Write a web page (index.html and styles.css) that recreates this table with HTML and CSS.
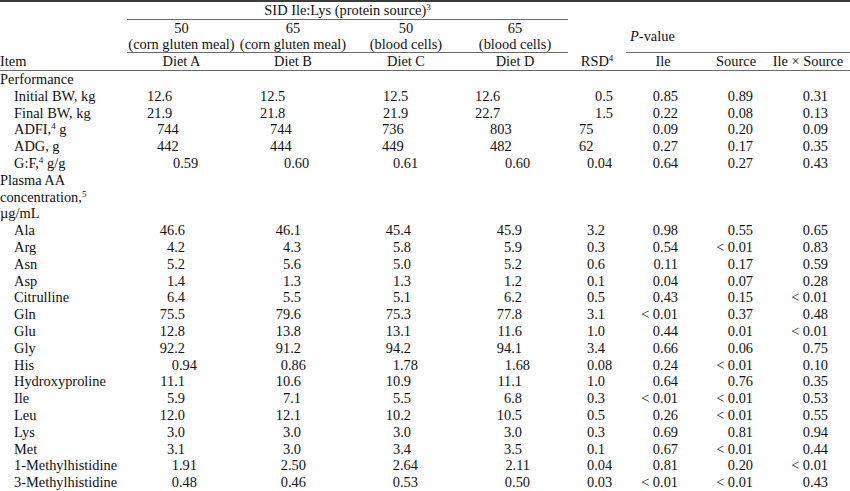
FILE: index.html
```html
<!DOCTYPE html>
<html>
<head>
<meta charset="utf-8">
<link rel="stylesheet" href="styles.css">
</head>
<body>
<table class="tbl">
<colgroup>
<col class="w-item"><col class="w-a"><col class="w-b"><col class="w-c"><col class="w-d"><col class="w-r"><col class="w-i"><col class="w-s"><col class="w-x">
</colgroup>
<thead>
<tr class="h1">
<td></td>
<td colspan="4" class="span ul">SID Ile:Lys (protein source)<sup>3</sup></td>
<td></td>
<td colspan="3"></td>
</tr>
<tr class="h2">
<td></td>
<td class="hc">50</td><td class="hc">65</td><td class="hc">50</td><td class="hc">65</td>
<td></td>
<td colspan="3" rowspan="2" class="pv ul"><i>P</i>-value</td>
</tr>
<tr class="h3">
<td></td>
<td class="hc ul">(corn gluten meal)</td><td class="hc ul">(corn gluten meal)</td><td class="hc ul">(blood cells)</td><td class="hc ul">(blood cells)</td>
<td></td>
</tr>
<tr class="h4">
<td class="ul hl">Item</td>
<td class="hc ul">Diet A</td><td class="hc ul">Diet B</td><td class="hc ul">Diet C</td><td class="hc ul">Diet D</td>
<td class="hc ul rsd">RSD<sup>4</sup></td>
<td class="hc ul">Ile</td><td class="hc ul src">Source</td><td class="hc ul">Ile × Source</td>
</tr>
</thead>
<tbody>
<tr><td class="grp">Performance</td><td></td><td></td><td></td><td></td><td></td><td></td><td></td><td></td></tr>
<tr class="p1"><td class="it">Initial BW, kg</td><td class="a">12.6</td><td class="b">12.5</td><td class="c">12.5</td><td class="d">12.6</td><td class="r">0.5</td><td class="i">0.85</td><td class="s">0.89</td><td class="x">0.31</td></tr>
<tr class="p1"><td class="it">Final BW, kg</td><td class="a">21.9</td><td class="b">21.8</td><td class="c">21.9</td><td class="d">22.7</td><td class="r">1.5</td><td class="i">0.22</td><td class="s">0.08</td><td class="x">0.13</td></tr>
<tr class="pi"><td class="it">ADFI,<sup>4</sup> g</td><td class="a">744</td><td class="b">744</td><td class="c">736</td><td class="d">803</td><td class="r">75</td><td class="i">0.09</td><td class="s">0.20</td><td class="x">0.09</td></tr>
<tr class="pi"><td class="it">ADG, g</td><td class="a">442</td><td class="b">444</td><td class="c">449</td><td class="d">482</td><td class="r">62</td><td class="i">0.27</td><td class="s">0.17</td><td class="x">0.35</td></tr>
<tr class="p2"><td class="it">G:F,<sup>4</sup> g/g</td><td class="a">0.59</td><td class="b">0.60</td><td class="c">0.61</td><td class="d">0.60</td><td class="r">0.04</td><td class="i">0.64</td><td class="s">0.27</td><td class="x">0.43</td></tr>
<tr><td class="grp">Plasma AA<br>concentration,<sup>5</sup><br>µg/mL</td><td></td><td></td><td></td><td></td><td></td><td></td><td></td><td></td></tr>
<tr class="q1"><td class="it">Ala</td><td class="a">46.6</td><td class="b">46.1</td><td class="c">45.4</td><td class="d">45.9</td><td class="r">3.2</td><td class="i">0.98</td><td class="s">0.55</td><td class="x">0.65</td></tr>
<tr class="q1"><td class="it">Arg</td><td class="a">4.2</td><td class="b">4.3</td><td class="c">5.8</td><td class="d">5.9</td><td class="r">0.3</td><td class="i">0.54</td><td class="s">&lt; 0.01</td><td class="x">0.83</td></tr>
<tr class="q1"><td class="it">Asn</td><td class="a">5.2</td><td class="b">5.6</td><td class="c">5.0</td><td class="d">5.2</td><td class="r">0.6</td><td class="i">0.11</td><td class="s">0.17</td><td class="x">0.59</td></tr>
<tr class="q1"><td class="it">Asp</td><td class="a">1.4</td><td class="b">1.3</td><td class="c">1.3</td><td class="d">1.2</td><td class="r">0.1</td><td class="i">0.04</td><td class="s">0.07</td><td class="x">0.28</td></tr>
<tr class="q1"><td class="it">Citrulline</td><td class="a">6.4</td><td class="b">5.5</td><td class="c">5.1</td><td class="d">6.2</td><td class="r">0.5</td><td class="i">0.43</td><td class="s">0.15</td><td class="x">&lt; 0.01</td></tr>
<tr class="q1"><td class="it">Gln</td><td class="a">75.5</td><td class="b">79.6</td><td class="c">75.3</td><td class="d">77.8</td><td class="r">3.1</td><td class="i">&lt; 0.01</td><td class="s">0.37</td><td class="x">0.48</td></tr>
<tr class="q1"><td class="it">Glu</td><td class="a">12.8</td><td class="b">13.8</td><td class="c">13.1</td><td class="d">11.6</td><td class="r">1.0</td><td class="i">0.44</td><td class="s">0.01</td><td class="x">&lt; 0.01</td></tr>
<tr class="q1"><td class="it">Gly</td><td class="a">92.2</td><td class="b">91.2</td><td class="c">94.2</td><td class="d">94.1</td><td class="r">3.4</td><td class="i">0.66</td><td class="s">0.06</td><td class="x">0.75</td></tr>
<tr class="q2"><td class="it">His</td><td class="a">0.94</td><td class="b">0.86</td><td class="c">1.78</td><td class="d">1.68</td><td class="r">0.08</td><td class="i">0.24</td><td class="s">&lt; 0.01</td><td class="x">0.10</td></tr>
<tr class="q1"><td class="it">Hydroxyproline</td><td class="a">11.1</td><td class="b">10.6</td><td class="c">10.9</td><td class="d">11.1</td><td class="r">1.0</td><td class="i">0.64</td><td class="s">0.76</td><td class="x">0.35</td></tr>
<tr class="q1"><td class="it">Ile</td><td class="a">5.9</td><td class="b">7.1</td><td class="c">5.5</td><td class="d">6.8</td><td class="r">0.3</td><td class="i">&lt; 0.01</td><td class="s">&lt; 0.01</td><td class="x">0.53</td></tr>
<tr class="q1"><td class="it">Leu</td><td class="a">12.0</td><td class="b">12.1</td><td class="c">10.2</td><td class="d">10.5</td><td class="r">0.5</td><td class="i">0.26</td><td class="s">&lt; 0.01</td><td class="x">0.55</td></tr>
<tr class="q1"><td class="it">Lys</td><td class="a">3.0</td><td class="b">3.0</td><td class="c">3.0</td><td class="d">3.0</td><td class="r">0.3</td><td class="i">0.69</td><td class="s">0.81</td><td class="x">0.94</td></tr>
<tr class="q1"><td class="it">Met</td><td class="a">3.1</td><td class="b">3.0</td><td class="c">3.4</td><td class="d">3.5</td><td class="r">0.1</td><td class="i">0.67</td><td class="s">&lt; 0.01</td><td class="x">0.44</td></tr>
<tr class="q2"><td class="it">1-Methylhistidine</td><td class="a">1.91</td><td class="b">2.50</td><td class="c">2.64</td><td class="d">2.11</td><td class="r">0.04</td><td class="i">0.81</td><td class="s">0.20</td><td class="x">&lt; 0.01</td></tr>
<tr class="q2"><td class="it">3-Methylhistidine</td><td class="a">0.48</td><td class="b">0.46</td><td class="c">0.53</td><td class="d">0.50</td><td class="r">0.03</td><td class="i">&lt; 0.01</td><td class="s">&lt; 0.01</td><td class="x">0.43</td></tr>
</tbody>
</table>
</body>
</html>
```

FILE: styles.css
```css
html, body {
  margin: 0;
  padding: 0;
  background: #fff;
}
body {
  font-family: "Liberation Serif", "Times New Roman", serif;
  font-size: 14.4px;
  color: #111;
}
.tbl {
  width: 850px;
  table-layout: fixed;
  border-collapse: separate;
  border-spacing: 0;
  border-top: 2px solid #3c3c3c;
}
.w-item { width: 127px; }
.w-a { width: 109px; }
.w-b { width: 114px; }
.w-c { width: 112px; }
.w-d { width: 106px; }
.w-r { width: 58px; }
.w-i { width: 74px; }
.w-s { width: 66px; }
.w-x { width: 84px; }
td {
  padding: 0;
  line-height: 16.8px;
  white-space: nowrap;
  vertical-align: middle;
}
sup {
  font-size: 9px;
  line-height: 0;
  vertical-align: 5px;
}
.ul { border-bottom: 1px solid #6a6a6a; }
.h1 td { line-height: 17px; }
.h2 td { line-height: 16px; }
.h3 td { line-height: 16px; }
.h4 td { line-height: 17px; }
.span { text-align: center; }
.hc { text-align: center; }
.hl { text-align: left; }
.pv { text-align: left; padding-left: 4px; }
.src { padding-left: 6px; }
.grp { text-align: left; white-space: normal; }
.it { text-align: left; padding-left: 14px; }

/* performance: one decimal */
.p1 .a { text-align: left; padding-left: 20px; }
.p1 .b { text-align: left; padding-left: 24px; }
.p1 .c { text-align: left; padding-left: 33px; }
.p1 .d { text-align: left; padding-left: 13px; }
.p1 .r { text-align: right; padding-right: 13px; }
/* performance: integers */
.pi .a { text-align: left; padding-left: 30px; }
.pi .b { text-align: left; padding-left: 34px; }
.pi .c { text-align: left; padding-left: 32px; }
.pi .d { text-align: left; padding-left: 28px; }
.pi .r { text-align: left; padding-left: 11px; }
/* performance: two decimals */
.p2 .a { text-align: left; padding-left: 46px; }
.p2 .b { text-align: left; padding-left: 48px; }
.p2 .c { text-align: left; padding-left: 43px; }
.p2 .d { text-align: left; padding-left: 43px; }
.p2 .r { text-align: left; padding-left: 19px; }
/* plasma: one decimal */
.q1 .a { text-align: right; padding-right: 51px; }
.q1 .b { text-align: right; padding-right: 49px; }
.q1 .c { text-align: right; padding-right: 51px; }
.q1 .d { text-align: right; padding-right: 46px; }
.q1 .r { text-align: left; padding-left: 19px; }
/* plasma: two decimals */
.q2 .a { text-align: right; padding-right: 39px; }
.q2 .b { text-align: right; padding-right: 44px; }
.q2 .c { text-align: right; padding-right: 44px; }
.q2 .d { text-align: right; padding-right: 38px; }
.q2 .r { text-align: left; padding-left: 19px; }

.i { text-align: right; padding-right: 22px; }
.s { text-align: right; padding-right: 13px; }
.x { text-align: right; padding-right: 22px; }
```
